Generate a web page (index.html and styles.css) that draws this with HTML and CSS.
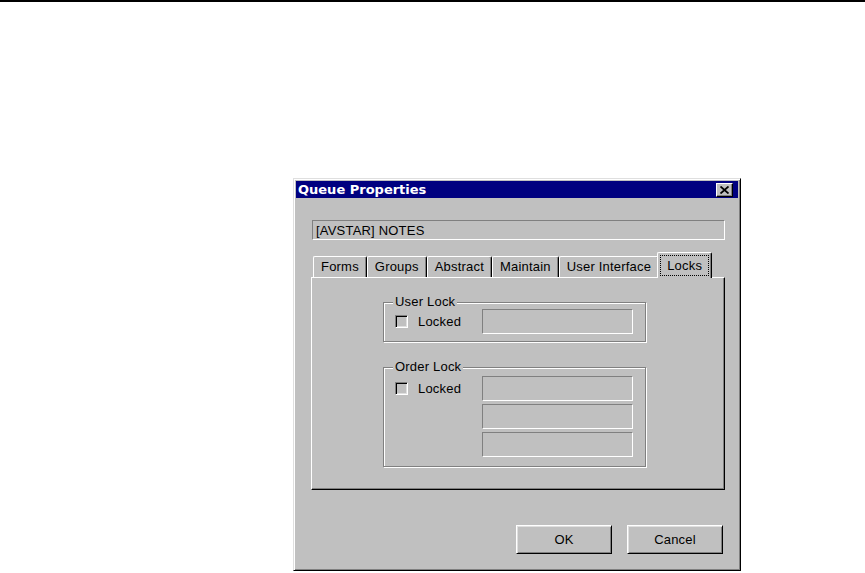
FILE: index.html
```html
<!DOCTYPE html>
<html lang="en">
<head>
    <meta charset="UTF-8">
    <title>Queue Properties</title>
    <link rel="stylesheet" href="styles.css">
</head>
<body>
  <div class="page-rule"></div>

  <div class="dialog">
    <div class="titlebar">
      <span class="title">Queue Properties</span>
      <span class="close-btn">
        <svg width="9" height="8" viewBox="0 0 9 8">
          <path d="M0.5 0.5 L8.5 7.5 M8.5 0.5 L0.5 7.5" stroke="#000" stroke-width="1.8" fill="none"/>
        </svg>
      </span>
    </div>

    <div class="queue-name">[AVSTAR] NOTES</div>

    <div class="tabs">
      <div class="tab">Forms</div>
      <div class="tab">Groups</div>
      <div class="tab">Abstract</div>
      <div class="tab">Maintain</div>
      <div class="tab">User Interface</div>
      <div class="tab tab-active"><span class="focus">Locks</span></div>
    </div>

    <div class="panel">
      <div class="group group-user">
        <span class="group-title">User Lock</span>
        <div class="check-col">
          <span class="check"></span>
          <span class="check-label">Locked</span>
        </div>
        <div class="field-col">
          <div class="field"></div>
        </div>
      </div>

      <div class="group group-order">
        <span class="group-title">Order Lock</span>
        <div class="check-col">
          <span class="check"></span>
          <span class="check-label">Locked</span>
        </div>
        <div class="field-col">
          <div class="field"></div>
          <div class="field"></div>
          <div class="field"></div>
        </div>
      </div>
    </div>

    <div class="buttons">
      <button class="btn">OK</button>
      <button class="btn">Cancel</button>
    </div>
  </div>
</body>
</html>
```

FILE: styles.css
```css
* {
  box-sizing: border-box;
}

body {
  margin: 0;
  background: #fff;
  font-family: "Liberation Sans", Arial, sans-serif;
  font-size: 13px;
  letter-spacing: 0.2px;
  color: #000;
}

.page-rule {
  height: 2px;
  background: #000;
}

/* window */
.dialog {
  width: 448px;
  height: 393px;
  margin: 176px 0 0 293px;
  padding: 2px;
  background: #c0c0c0;
  border: 1px solid;
  border-color: #dfdfdf #000 #000 #dfdfdf;
  box-shadow: inset 1px 1px #fff, inset -1px -1px #808080;
}

.titlebar {
  height: 17px;
  background: #000080;
  display: flex;
  align-items: center;
  justify-content: space-between;
  padding: 0 5px 0 2px;
}

.title {
  color: #fff;
  font-family: "DejaVu Sans", sans-serif;
  font-weight: bold;
  font-size: 13px;
  letter-spacing: 0;
}

.close-btn {
  width: 17px;
  height: 14px;
  background: #c0c0c0;
  border: 1px solid;
  border-color: #fff #000 #000 #fff;
  box-shadow: inset -1px -1px #808080;
  display: flex;
  align-items: center;
  justify-content: center;
}

.queue-name {
  height: 20px;
  margin: 22px 13px 0 16px;
  padding: 2px 3px;
  border: 1px solid;
  border-color: #808080 #fff #fff #808080;
  line-height: 15px;
}

/* tabs */
.tabs {
  display: flex;
  align-items: flex-end;
  height: 25px;
  margin: 12px 0 0 15px;
  padding-left: 2px;
}

.tab {
  height: 21px;
  padding: 0 7px;
  line-height: 19px;
  border: 1px solid;
  border-color: #fff #000 transparent #fff;
  border-bottom: none;
  border-radius: 2px 2px 0 0;
  box-shadow: inset -1px 0 #808080;
}

.tab-active {
  height: 26px;
  margin: 0 -2px -1px;
  padding: 2px 2px 0;
  background: #c0c0c0;
  position: relative;
  z-index: 1;
}

.focus {
  display: block;
  height: 21px;
  padding: 0 6px;
  line-height: 19px;
  border: 1px dotted #000;
}

.panel {
  width: 414px;
  height: 213px;
  margin-left: 15px;
  padding: 24px 0 0 71px;
  border: 1px solid;
  border-color: #fff #000 #000 #fff;
  box-shadow: inset -1px -1px #808080;
}

/* group boxes */
.group {
  position: relative;
  width: 263px;
  display: flex;
  border: 1px solid #808080;
  box-shadow: 1px 1px #fff, inset 1px 1px #fff;
}

.group-user {
  padding: 6px 12px 7px 11px;
}

.group-order {
  margin-top: 25px;
  padding: 8px 12px 9px 11px;
}

.group-title {
  position: absolute;
  top: -8px;
  left: 9px;
  padding: 0 2px;
  background: #c0c0c0;
  line-height: 14px;
}

.check-col {
  width: 87px;
  height: 25px;
  display: flex;
  align-items: center;
}

.check {
  width: 13px;
  height: 13px;
  border: 1px solid;
  border-color: #808080 #fff #fff #808080;
  box-shadow: inset 1px 1px #000, inset -1px -1px #dfdfdf;
}

.check-label {
  margin-left: 10px;
}

.field-col {
  display: flex;
  flex-direction: column;
  gap: 3px;
}

.field {
  width: 151px;
  height: 25px;
  border: 1px solid;
  border-color: #808080 #fff #fff #808080;
}

/* buttons */
.buttons {
  display: flex;
  justify-content: flex-end;
  gap: 15px;
  margin: 35px 15px 0 0;
}

.btn {
  width: 96px;
  height: 29px;
  font-family: inherit;
  font-size: 13px;
  letter-spacing: 0.2px;
  color: #000;
  background: #c0c0c0;
  border: 1px solid;
  border-color: #fff #000 #000 #fff;
  box-shadow: inset 1px 1px #dfdfdf, inset -1px -1px #808080;
  padding: 0;
}
```
